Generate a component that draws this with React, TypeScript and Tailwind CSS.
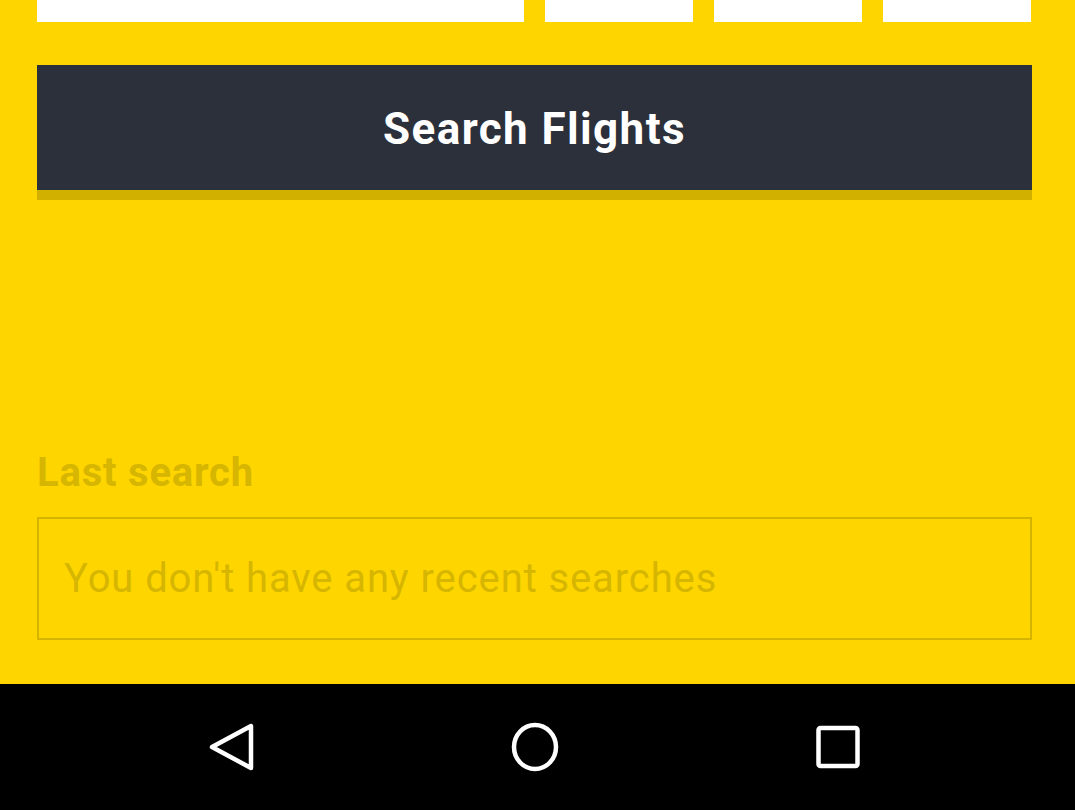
import React from "react";

export default function App() {
  return (
    <div
      className="w-[1075px] h-[810px] bg-[#FFD500] flex flex-col overflow-hidden"
      style={{ fontFamily: "Roboto, 'Noto Sans', sans-serif" }}
    >
      <div className="flex-1 flex flex-col pl-[37px] pr-[43px]">
        <div className="flex h-[22px] gap-[21px]">
          <div className="w-[487px] bg-white" />
          <div className="w-[148px] bg-white" />
          <div className="w-[148px] bg-white" />
          <div className="w-[148px] bg-white" />
        </div>
        <div className="mt-[43px] h-[125px] bg-[#2B303B] shadow-[0_10px_0_#D2B000] flex items-center justify-center">
          <span className="text-white font-bold text-[44px] leading-none tracking-[1.4px] pt-[3px]">
            Search Flights
          </span>
        </div>
        <div className="mt-[259px] h-[48px] leading-[48px] text-[40px] font-bold text-[#D6B600] tracking-[0.8px]">
          Last search
        </div>
        <div className="mt-[20px] h-[123px] border-2 border-[#D4B400] flex items-center pl-[25px]">
          <span className="text-[40px] leading-none text-[#D6B600] tracking-[0.9px]">
            You don't have any recent searches
          </span>
        </div>
      </div>
      <div className="h-[126px] bg-black flex items-center justify-center gap-[243px] pr-[6px]">
        <svg width="60" height="60" viewBox="0 0 60 60">
          <path
            d="M10 30 L49 9 L49 51 Z"
            fill="none"
            stroke="white"
            strokeWidth="4.5"
            strokeLinejoin="round"
          />
        </svg>
        <svg width="60" height="60" viewBox="0 0 60 60">
          <ellipse cx="30" cy="30" rx="21" ry="22" fill="none" stroke="white" strokeWidth="4.5" />
        </svg>
        <svg width="60" height="60" viewBox="0 0 60 60">
          <rect
            x="10.5"
            y="11"
            width="39"
            height="38"
            rx="2"
            fill="none"
            stroke="white"
            strokeWidth="4.5"
          />
        </svg>
      </div>
    </div>
  );
}
